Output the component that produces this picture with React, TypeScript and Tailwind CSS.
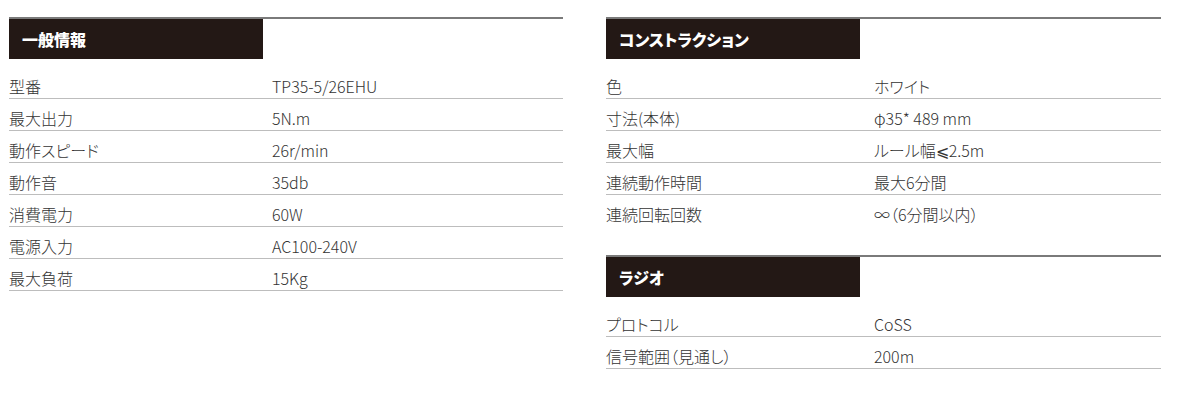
const general = [
  ['型番', 'TP35-5/26EHU'],
  ['最大出力', '5N.m'],
  ['動作スピード', '26r/min'],
  ['動作音', '35db'],
  ['消費電力', '60W'],
  ['電源入力', 'AC100-240V'],
  ['最大負荷', '15Kg'],
];

const construction = [
  ['色', 'ホワイト'],
  ['寸法(本体)', 'φ35* 489 mm'],
  ['最大幅', 'ルール幅⩽2.5m'],
  ['連続動作時間', '最大6分間'],
  ['連続回転回数', '∞（6分間以内）'],
];

const radio = [
  ['プロトコル', 'CoSS'],
  ['信号範囲（見通し）', '200m'],
];

type SpecProps = {
  title: string;
  rows: string[][];
  labelWidth: string;
  lastBorder?: boolean;
};

const SpecTable = ({ title, rows, labelWidth, lastBorder = true }: SpecProps) => (
  <section>
    <div className="border-t-2 border-[#7a7a7a]">
      <div className="w-[254px] h-[40px] bg-[#231815] text-white font-black text-[16px] flex items-center px-[13px]">
        {title}
      </div>
    </div>
    <div className="mt-2">
      {rows.map(([label, value], i) => (
        <div
          key={label}
          className={
            i === rows.length - 1 && !lastBorder
              ? 'flex h-8 pt-[11px] leading-4 text-[16px] font-light text-[#333]'
              : 'flex h-8 pt-[11px] leading-4 text-[16px] font-light text-[#333] border-b border-[#bdbdbd]'
          }
        >
          <span className={labelWidth}>{label}</span>
          <span>{value}</span>
        </div>
      ))}
    </div>
  </section>
);

export default function App() {
  return (
    <div
      className="w-[1178px] h-[407px] bg-white flex gap-[43px] pl-[9px] pt-[17px] [font-feature-settings:'palt']"
      style={{ fontFamily: '"Noto Sans CJK JP", "Noto Sans", sans-serif' }}
    >
      <div className="w-[554px]">
        <SpecTable title="一般情報" rows={general} labelWidth="w-[263px]" />
      </div>
      <div className="w-[555px] flex flex-col gap-7">
        <SpecTable title="コンストラクション" rows={construction} labelWidth="w-[268px]" lastBorder={false} />
        <SpecTable title="ラジオ" rows={radio} labelWidth="w-[268px]" />
      </div>
    </div>
  );
}
